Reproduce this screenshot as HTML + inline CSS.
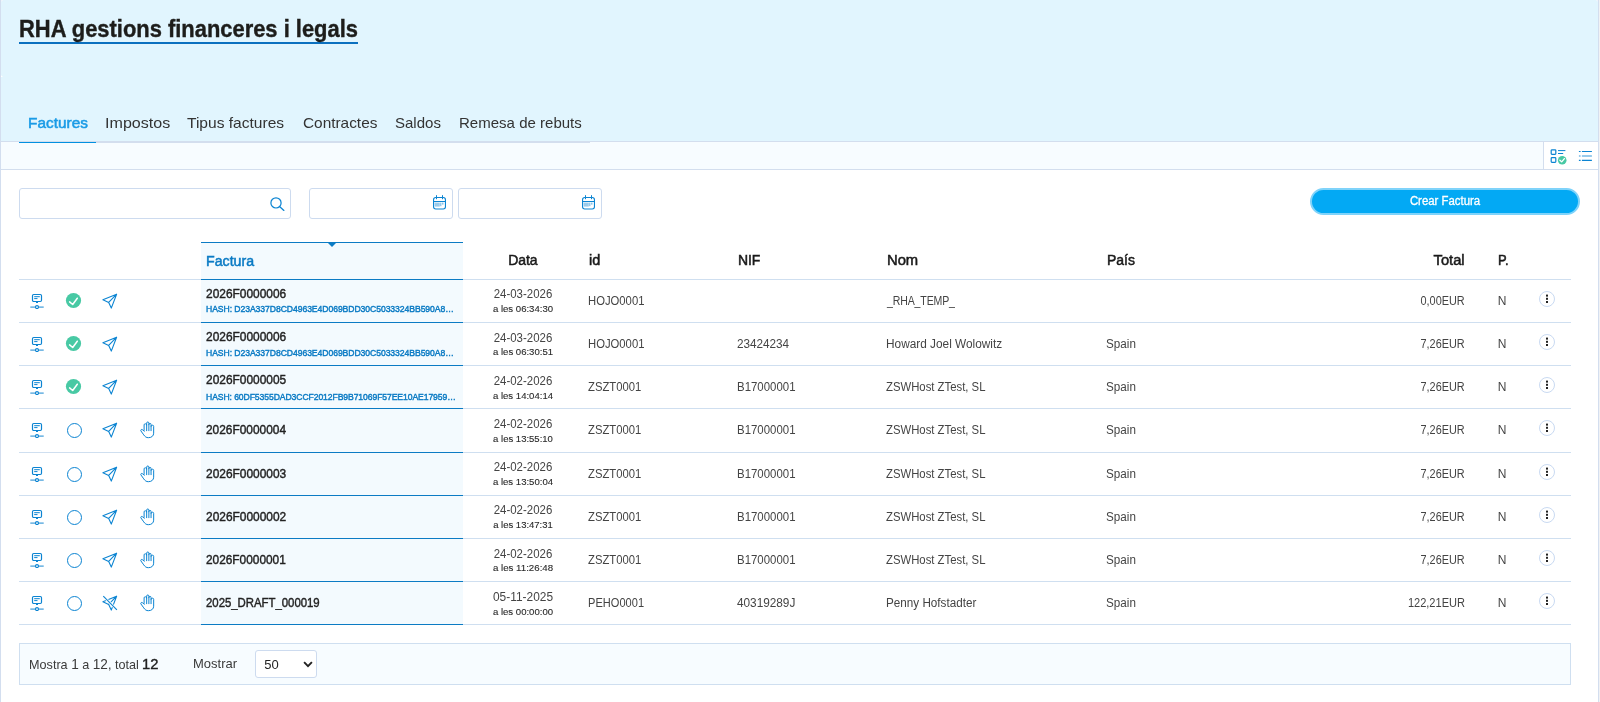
<!DOCTYPE html>
<html lang="ca">
<head>
<meta charset="utf-8">
<title>RHA gestions financeres i legals</title>
<style>
html,body{margin:0;padding:0;background:#fff;}
body{font-family:"Liberation Sans",sans-serif;color:#2b2b2b;}
#app{position:relative;width:1600px;height:702px;overflow:hidden;background:#fff;will-change:transform;}
#app::before{content:"";position:absolute;left:0;top:0;width:1px;height:702px;background:#d3deef;z-index:9;}
#app::after{content:"";position:absolute;left:1598px;top:0;width:1px;height:702px;background:#d3deef;z-index:9;border-right:1px solid #f1f2f4;}
.hdr{position:absolute;left:0;top:0;width:1600px;height:141px;background:#e1f5fe;border-bottom:1px solid #d3deee;}
.title{position:absolute;left:19px;top:14px;margin:0;font-size:24px;line-height:30px;font-weight:700;color:#1d1d1b;-webkit-text-stroke:.4px #1d1d1b;white-space:nowrap;border-bottom:2px solid #0b70bf;height:28px;width:339px;}
.title span{display:inline-block;transform-origin:left center;}
.tabs{position:absolute;left:0;top:104px;height:39px;width:600px;z-index:2;}
.tab{position:absolute;top:0;height:39px;box-sizing:border-box;padding-left:9px;font-size:15px;line-height:37px;color:#333;white-space:nowrap;border-bottom:1px solid #d3deee;}
.tab.on{color:#1a9be6;border-bottom-color:#0290e0;-webkit-text-stroke:.55px #1a9be6;}
.tab span{display:inline-block;transform-origin:left center;}
.strip{position:absolute;left:1px;top:142px;width:1597px;height:27px;background:#f7fcff;border-bottom:1px solid #d3deee;}
.tools{position:absolute;left:1542px;top:0;width:54px;height:27px;background:#fff;border-left:1px solid #d3deee;}
.tools svg{position:absolute;}
.ic-lc{left:6px;top:7px;}
.ic-ls{left:34px;top:8px;}
.inp{position:absolute;top:188px;height:31px;box-sizing:border-box;border:1px solid #cddbef;border-radius:3px;background:#fff;}
.inp svg{position:absolute;}
.s1{left:19px;width:272px;} .s1 svg{left:250px;top:8px;}
.d1{left:309px;width:144px;} .d1 svg{left:123px;top:6px;}
.d2{left:458px;width:144px;} .d2 svg{left:123px;top:6px;}
.btn{position:absolute;left:1310px;top:188px;width:270px;height:27px;box-sizing:border-box;border:2px solid #7fd3fa;border-radius:14px;background:#03a9f4;color:#fff;font-family:inherit;font-size:12px;font-weight:400;line-height:21px;padding:0;text-align:center;-webkit-text-stroke:.3px #fff;}
.btn span{display:inline-block;transform-origin:center;}
.tbl{position:absolute;left:0;top:0;width:1600px;height:0;}
.fcol{position:absolute;left:201px;top:242px;width:262px;height:383px;background:#f3fafe;}
.ln{position:absolute;left:19px;width:1552px;height:1px;background:#cfdff0;}
.fl{position:absolute;left:201px;width:262px;height:1px;background:#0b7bc4;}
.thead{position:absolute;left:0;top:243px;height:36px;width:1600px;}
.th{position:absolute;top:-1px;font-size:14px;line-height:36px;font-weight:400;color:#1a1a1a;white-space:nowrap;-webkit-text-stroke:.5px #1a1a1a;transform-origin:left center;}
.th.c-fac{top:0;color:#0b7bc4;-webkit-text-stroke-color:#0b7bc4;}
.caret{position:absolute;left:328px;top:0;width:0;height:0;border-left:4px solid transparent;border-right:4px solid transparent;border-top:4px solid #0b7bc4;}
.tr{position:absolute;left:0;width:1600px;}
.tr svg{position:absolute;}
.td{position:absolute;top:0;font-size:12px;line-height:43px;white-space:nowrap;color:#444;transform-origin:left center;}
.c-fac{left:206px;} .c-id{left:588px;} .c-nif{left:737px;} .c-nom{left:886px;} .c-pai{left:1106px;} .c-p{left:1497.7px;}
.c-tot{right:135px;text-align:right;transform-origin:right center !important;}
.th.c-dat{left:483px;width:80px;text-align:center;}
.td.c-dat{left:473px;width:100px;text-align:center;line-height:14px;}
.td.c-dat span{display:block;position:relative;margin-top:7px;transform-origin:center;} .td.c-dat small{display:block;position:relative;font-size:9.6px;color:#2a2a2a;-webkit-text-stroke:.12px #2a2a2a;margin-top:0.8px;transform-origin:center;}
.td.c-fac b{display:block;font-weight:400;color:#222;-webkit-text-stroke:.4px #222;transform-origin:left center;}
.td.c-fac em{display:block;position:relative;font-style:normal;font-size:9.8px;font-weight:400;color:#0b7bc4;-webkit-text-stroke:.45px #0b7bc4;margin-top:1.2px;transform-origin:left center;}
.td.c-fac.two{line-height:14px;} .td.c-fac.two b{margin-top:7px;}
.i1{left:29px;top:12px;} .i2{left:65.45px;top:12.3px;} .i2.rg{left:65.8px;top:12.5px;} .i3{left:101px;top:12px;} .i4{left:139.5px;top:12px;}
.menu{position:absolute;left:1539px;top:10.6px;width:16px;height:16px;box-sizing:border-box;border:1px solid #c9daf2;border-radius:50%;background:#fff;}
.menu svg{left:5px;top:2px;}
.pager{position:absolute;left:19px;top:643px;width:1552px;height:42px;box-sizing:border-box;border:1px solid #cfdff0;background:#f7fcff;font-size:13px;line-height:40px;color:#3a3a3a;}
.pager span{position:absolute;top:0;white-space:nowrap;transform-origin:left center;}
.pg1{left:9px;} .pg2{left:122px;font-size:15px;font-weight:400;color:#222;-webkit-text-stroke:.4px #222;} .pg3{left:173px;}
.sel{left:235px;top:6px !important;width:62px;height:28px;box-sizing:border-box;border:1px solid #cddbef;border-radius:3px;background:#fff;line-height:26px;color:#222;}
.sel span{left:8.3px;top:.6px;font-size:13px;} .sel svg{position:absolute;left:47px;top:10px;}
.pg1 i{font-style:normal;font-size:14px;}
.th.c-id{left:588.7px;} .th.c-nif{left:737.8px;} .th.c-nom{left:887px;} .th.c-pai{left:1106.5px;} .th.c-p{left:1497.6px;} .th.c-tot{right:135.4px;} .th.c-dat{left:482.8px;}
.td.c-nom.us{left:887px;}
.px{position:absolute;width:1px;height:1px;z-index:10;}
.px.a{left:1px;top:76px;background:#fff;box-shadow:1px 0 0 rgba(255,255,255,.45),0 -1px 0 rgba(255,255,255,.3);}
.px.b{left:1px;top:0;background:#eef3fa;box-shadow:1px 0 0 #edf6fd,0 1px 0 #e8f5fd;}
.px.c{left:1597px;top:0;background:#eef3fa;box-shadow:-1px 0 0 #edf6fd,0 1px 0 #e8f5fd;}
</style>
</head>
<body>
<svg width="0" height="0" style="position:absolute" aria-hidden="true">
<defs>
<symbol id="i-stand" viewBox="0 0 16 17"><g fill="none" stroke="#0b84d2" stroke-width="1.2"><rect x="3.5" y="2.5" width="9" height="7" rx="1.2"/><path d="M6.7 9.7 L8 11 L9.3 9.7" stroke-width="1"/><path d="M5.2 4.7H10.8M5.2 6.6H8.5" stroke-width="1"/><path d="M1.3 15.1H14.7" stroke="#3d9bd9" stroke-width="1.2"/><circle cx="8" cy="15.1" r="1.5" fill="#fff" stroke-width="1.1"/></g></symbol>
<symbol id="i-ok" viewBox="0 0 17 17"><circle cx="8.5" cy="8.5" r="7.6" fill="#48c9a4"/><path d="M4.6 9.9 L7.7 12.5 L12.3 6.2" fill="none" stroke="#fff" stroke-width="1.5" stroke-linecap="round" stroke-linejoin="round"/></symbol>
<symbol id="i-ring" viewBox="0 0 17 17"><circle cx="8.5" cy="8.5" r="7" fill="none" stroke="#0b84d2" stroke-width="1"/></symbol>
<symbol id="i-plane" viewBox="0 0 17 17"><path d="M15.6 2.2 L1.9 7.8 L7.7 10.4 L10.3 16.1 Z M15.6 2.2 L7.7 10.4" fill="none" stroke="#0b84d2" stroke-width="1.1" stroke-linejoin="round"/></symbol>
<symbol id="i-planex" viewBox="0 0 17 17"><path d="M15.6 2.2 L1.9 7.8 L7.7 10.4 L10.3 16.1 Z M15.6 2.2 L7.7 10.4" fill="none" stroke="#0b84d2" stroke-width="1.1" stroke-linejoin="round"/><path d="M2.3 2.2 L15.9 15.9" stroke="#fff" stroke-width="2.6"/><path d="M2.3 2.2 L15.9 15.9" stroke="#0b84d2" stroke-width="1.1"/></symbol>
<symbol id="i-hand" viewBox="0 0 16 18"><path d="M4.1 9.3 V3.9 a1.28 1.1 0 0 1 2.56 0 V9.7 M6.66 3.9 V2.1 a1.1 1.1 0 0 1 2.2 0 V9.7 M8.86 3.5 a1.1 1.1 0 0 1 2.2 0 V9.7 M11.06 5.3 a1.3 1.1 0 0 1 2.6 0 V12.2 c0 2.6 -2 4.5 -5.3 4.5 c-2 0 -3.4 -1 -4.6 -2.8 L0.9 9.9 c-.6 -1 .7 -1.9 1.5 -1.2 L4.3 10.2" fill="none" stroke="#0b84d2" stroke-width="1" stroke-linecap="round" stroke-linejoin="round"/></symbol>
<symbol id="i-search" viewBox="0 0 16 15"><circle cx="6" cy="5.9" r="5.1" fill="none" stroke="#0b84d2" stroke-width="1.2"/><path d="M9.8 9.8 L13.9 13.4" stroke="#0b84d2" stroke-width="1.3" stroke-linecap="round"/></symbol>
<symbol id="i-cal" viewBox="0 0 14 15"><rect x=".55" y="2.55" width="11.9" height="11.4" rx="2.2" fill="none" stroke="#0b84d2" stroke-width="1.1"/><path d="M3.5 .2V4.2M9.5 .2V4.2" stroke="#0b84d2" stroke-width="1"/><path d="M.6 6.5H12.4" stroke="#0b84d2" stroke-width="1"/><rect x="1.6" y="7.6" width="5.2" height="4" fill="#0b84d2" opacity=".42"/><rect x="7.4" y="7.6" width=".9" height="3.6" fill="#0b84d2" opacity=".7"/><rect x="9.4" y="7.6" width=".9" height="2" fill="#0b84d2" opacity=".8"/></symbol>
<symbol id="i-dots" viewBox="0 0 4 10"><rect x="1" y=".6" width="2" height="2" fill="#222"/><rect x="1" y="3.8" width="2" height="2" fill="#222"/><rect x="1" y="7" width="2" height="2" fill="#222"/></symbol>
<symbol id="i-chev" viewBox="0 0 11 7"><path d="M1.1 1.2 L5 5.2 L8.9 1.2" fill="none" stroke="#222" stroke-width="1.9"/></symbol>
<symbol id="i-listcheck" viewBox="0 0 18 16"><g fill="none" stroke="#0b84d2"><rect x="1.2" y=".8" width="4.6" height="4.6" rx=".8" stroke-width="1.2"/><rect x="1.2" y="8.7" width="4.6" height="4.6" rx=".8" stroke-width="1.2"/><path d="M8 1.6H15.4M8 4.5H13.2" stroke-width="1"/></g><circle cx="12.2" cy="11.2" r="4.3" fill="#48c9a4"/><path d="M9.9 11.2 L11.7 12.9 L14.4 9.6" fill="none" stroke="#fff" stroke-width="1.3" stroke-linecap="round" stroke-linejoin="round"/></symbol>
<symbol id="i-list" viewBox="0 0 15 12"><g stroke="#0b84d2"><path d="M.9 1.5H2.6M3.9 1.5H13.9" stroke-width="1.1"/><path d="M.9 6H2.6M3.9 6H13.9" stroke-width="1.7" opacity=".55"/><path d="M.9 10.4H2.6M3.9 10.4H13.9" stroke-width="1.1"/></g></symbol>
</defs>
</svg>
<div id="app">
<header class="hdr">
<h1 class="title"><span style="transform:scaleX(0.913)">RHA gestions financeres i legals</span></h1>
<nav class="tabs">
<a class="tab on" style="left:19px;width:77px"><span style="letter-spacing:0.03px;transform:scaleX(1.022)">Factures</span></a>
<a class="tab" style="left:96px;width:82px"><span style="letter-spacing:0.02px;transform:scaleX(1.071)">Impostos</span></a>
<a class="tab" style="left:178px;width:116px"><span style="letter-spacing:-0.01px;transform:scaleX(1.038)">Tipus factures</span></a>
<a class="tab" style="left:294px;width:92px"><span style="letter-spacing:-0.01px;transform:scaleX(1.027)">Contractes</span></a>
<a class="tab" style="left:386px;width:64px"><span style="letter-spacing:-0.01px;transform:scaleX(1.002)">Saldos</span></a>
<a class="tab" style="left:450px;width:140px"><span style="transform:scaleX(1.002)">Remesa de rebuts</span></a>
</nav>
</header>
<div class="strip"><div class="tools"><svg class="ic-lc" width="18" height="16" viewBox="0 0 18 16"><use href="#i-listcheck"/></svg><svg class="ic-ls" width="15" height="12" viewBox="0 0 15 12"><use href="#i-list"/></svg></div></div>
<div class="filters">
<div class="inp s1"><svg width="16" height="15" viewBox="0 0 16 15"><use href="#i-search"/></svg></div>
<div class="inp d1"><svg width="14" height="15" viewBox="0 0 14 15"><use href="#i-cal"/></svg></div>
<div class="inp d2"><svg width="14" height="15" viewBox="0 0 14 15"><use href="#i-cal"/></svg></div>
<button class="btn"><span style="transform:scaleX(0.949)">Crear Factura</span></button>
</div>
<div class="tbl">
<div class="fcol"></div>
<div class="thead">
<span class="th c-fac" style="letter-spacing:0.01px;transform:scaleX(1.012)">Factura</span><i class="caret"></i><span class="th c-dat" style="letter-spacing:-0.03px;transform:scaleX(0.998)">Data</span><span class="th c-id" style="transform:scaleX(1.032)">id</span><span class="th c-nif" style="letter-spacing:-0.16px;transform:scaleX(0.998)">NIF</span><span class="th c-nom" style="letter-spacing:-0.02px;transform:scaleX(1.057)">Nom</span><span class="th c-pai" style="letter-spacing:-0.03px;transform:scaleX(0.998)">País</span><span class="th c-tot" style="letter-spacing:0.01px;transform:scaleX(1.048)">Total</span><span class="th c-p" style="transform:scaleX(0.926)">P.</span>
</div>
<div class="tr" style="top:280px;height:42px">
<svg class="i1" width="16" height="17" viewBox="0 0 16 17"><use href="#i-stand"/></svg><svg class="i2" width="17" height="17" viewBox="0 0 17 17"><use href="#i-ok"/></svg><svg class="i3" width="17" height="17" viewBox="0 0 17 17"><use href="#i-plane"/></svg>
<span class="td c-fac two"><b style="transform:scaleX(0.994)">2026F0000006</b><em style="letter-spacing:-0.08px;transform:scaleX(0.880)">HASH: D23A337D8CD4963E4D069BDD30C5033324BB590A8…</em></span><span class="td c-dat"><span style="letter-spacing:0.02px;transform:scaleX(0.952)">24-03-2026</span><small style="transform:scaleX(0.998)">a les 06:34:30</small></span><span class="td c-id" style="letter-spacing:0.01px;transform:scaleX(0.939)">HOJO0001</span><span class="td c-nom us" style="letter-spacing:-0.16px;transform:scaleX(0.880)">_RHA_TEMP_</span><span class="td c-tot" style="letter-spacing:-0.01px;transform:scaleX(0.907)">0,00EUR</span><span class="td c-p">N</span><span class="menu"><svg width="4" height="10" viewBox="0 0 4 10"><use href="#i-dots"/></svg></span>
</div>
<div class="tr" style="top:323px;height:42px">
<svg class="i1" width="16" height="17" viewBox="0 0 16 17"><use href="#i-stand"/></svg><svg class="i2" width="17" height="17" viewBox="0 0 17 17"><use href="#i-ok"/></svg><svg class="i3" width="17" height="17" viewBox="0 0 17 17"><use href="#i-plane"/></svg>
<span class="td c-fac two"><b style="transform:scaleX(0.994)">2026F0000006</b><em style="letter-spacing:-0.08px;transform:scaleX(0.880);top:0.5px">HASH: D23A337D8CD4963E4D069BDD30C5033324BB590A8…</em></span><span class="td c-dat"><span style="letter-spacing:0.02px;transform:scaleX(0.952);top:0.5px">24-03-2026</span><small style="transform:scaleX(0.996)">a les 06:30:51</small></span><span class="td c-id" style="letter-spacing:0.01px;transform:scaleX(0.939)">HOJO0001</span><span class="td c-nif" style="letter-spacing:-0.03px;transform:scaleX(0.979)">23424234</span><span class="td c-nom" style="transform:scaleX(0.986)">Howard Joel Wolowitz</span><span class="td c-pai" style="letter-spacing:0.03px;transform:scaleX(0.973)">Spain</span><span class="td c-tot" style="letter-spacing:-0.01px;transform:scaleX(0.907)">7,26EUR</span><span class="td c-p">N</span><span class="menu"><svg width="4" height="10" viewBox="0 0 4 10"><use href="#i-dots"/></svg></span>
</div>
<div class="tr" style="top:366px;height:42px">
<svg class="i1" width="16" height="17" viewBox="0 0 16 17"><use href="#i-stand"/></svg><svg class="i2" width="17" height="17" viewBox="0 0 17 17"><use href="#i-ok"/></svg><svg class="i3" width="17" height="17" viewBox="0 0 17 17"><use href="#i-plane"/></svg>
<span class="td c-fac two"><b style="transform:scaleX(0.994)">2026F0000005</b><em style="letter-spacing:-0.11px;transform:scaleX(0.880);top:1.8px">HASH: 60DF5355DAD3CCF2012FB9B71069F57EE10AE17959…</em></span><span class="td c-dat"><span style="letter-spacing:0.02px;transform:scaleX(0.952);top:1px">24-02-2026</span><small style="transform:scaleX(0.998);top:1px">a les 14:04:14</small></span><span class="td c-id" style="transform:scaleX(0.938)">ZSZT0001</span><span class="td c-nif" style="letter-spacing:0.03px;transform:scaleX(0.950)">B17000001</span><span class="td c-nom" style="transform:scaleX(0.944)">ZSWHost ZTest, SL</span><span class="td c-pai" style="letter-spacing:0.03px;transform:scaleX(0.973)">Spain</span><span class="td c-tot" style="letter-spacing:-0.01px;transform:scaleX(0.907)">7,26EUR</span><span class="td c-p">N</span><span class="menu"><svg width="4" height="10" viewBox="0 0 4 10"><use href="#i-dots"/></svg></span>
</div>
<div class="tr t44" style="top:409px;height:43px">
<svg class="i1" width="16" height="17" viewBox="0 0 16 17"><use href="#i-stand"/></svg><svg class="i2 rg" width="17" height="17" viewBox="0 0 17 17"><use href="#i-ring"/></svg><svg class="i3" width="17" height="17" viewBox="0 0 17 17"><use href="#i-plane"/></svg><svg class="i4" width="16" height="18" viewBox="0 0 16 18"><use href="#i-hand"/></svg>
<span class="td c-fac one"><b style="transform:scaleX(0.991)">2026F0000004</b></span><span class="td c-dat"><span style="letter-spacing:0.02px;transform:scaleX(0.952);top:1px">24-02-2026</span><small style="transform:scaleX(0.992);top:1.5px">a les 13:55:10</small></span><span class="td c-id" style="transform:scaleX(0.938)">ZSZT0001</span><span class="td c-nif" style="letter-spacing:0.03px;transform:scaleX(0.950)">B17000001</span><span class="td c-nom" style="transform:scaleX(0.944)">ZSWHost ZTest, SL</span><span class="td c-pai" style="letter-spacing:0.03px;transform:scaleX(0.973)">Spain</span><span class="td c-tot" style="letter-spacing:-0.01px;transform:scaleX(0.907)">7,26EUR</span><span class="td c-p">N</span><span class="menu"><svg width="4" height="10" viewBox="0 0 4 10"><use href="#i-dots"/></svg></span>
</div>
<div class="tr" style="top:453px;height:42px">
<svg class="i1" width="16" height="17" viewBox="0 0 16 17"><use href="#i-stand"/></svg><svg class="i2 rg" width="17" height="17" viewBox="0 0 17 17"><use href="#i-ring"/></svg><svg class="i3" width="17" height="17" viewBox="0 0 17 17"><use href="#i-plane"/></svg><svg class="i4" width="16" height="18" viewBox="0 0 16 18"><use href="#i-hand"/></svg>
<span class="td c-fac one"><b style="transform:scaleX(0.994)">2026F0000003</b></span><span class="td c-dat"><span style="letter-spacing:0.02px;transform:scaleX(0.952)">24-02-2026</span><small style="transform:scaleX(0.998)">a les 13:50:04</small></span><span class="td c-id" style="transform:scaleX(0.938)">ZSZT0001</span><span class="td c-nif" style="letter-spacing:0.03px;transform:scaleX(0.950)">B17000001</span><span class="td c-nom" style="transform:scaleX(0.944)">ZSWHost ZTest, SL</span><span class="td c-pai" style="letter-spacing:0.03px;transform:scaleX(0.973)">Spain</span><span class="td c-tot" style="letter-spacing:-0.01px;transform:scaleX(0.907)">7,26EUR</span><span class="td c-p">N</span><span class="menu"><svg width="4" height="10" viewBox="0 0 4 10"><use href="#i-dots"/></svg></span>
</div>
<div class="tr" style="top:496px;height:42px">
<svg class="i1" width="16" height="17" viewBox="0 0 16 17"><use href="#i-stand"/></svg><svg class="i2 rg" width="17" height="17" viewBox="0 0 17 17"><use href="#i-ring"/></svg><svg class="i3" width="17" height="17" viewBox="0 0 17 17"><use href="#i-plane"/></svg><svg class="i4" width="16" height="18" viewBox="0 0 16 18"><use href="#i-hand"/></svg>
<span class="td c-fac one"><b style="transform:scaleX(0.994)">2026F0000002</b></span><span class="td c-dat"><span style="letter-spacing:0.02px;transform:scaleX(0.952)">24-02-2026</span><small style="transform:scaleX(0.989)">a les 13:47:31</small></span><span class="td c-id" style="transform:scaleX(0.938)">ZSZT0001</span><span class="td c-nif" style="letter-spacing:0.03px;transform:scaleX(0.950)">B17000001</span><span class="td c-nom" style="transform:scaleX(0.944)">ZSWHost ZTest, SL</span><span class="td c-pai" style="letter-spacing:0.03px;transform:scaleX(0.973)">Spain</span><span class="td c-tot" style="letter-spacing:-0.01px;transform:scaleX(0.907)">7,26EUR</span><span class="td c-p">N</span><span class="menu"><svg width="4" height="10" viewBox="0 0 4 10"><use href="#i-dots"/></svg></span>
</div>
<div class="tr" style="top:539px;height:42px">
<svg class="i1" width="16" height="17" viewBox="0 0 16 17"><use href="#i-stand"/></svg><svg class="i2 rg" width="17" height="17" viewBox="0 0 17 17"><use href="#i-ring"/></svg><svg class="i3" width="17" height="17" viewBox="0 0 17 17"><use href="#i-plane"/></svg><svg class="i4" width="16" height="18" viewBox="0 0 16 18"><use href="#i-hand"/></svg>
<span class="td c-fac one"><b style="transform:scaleX(0.988)">2026F0000001</b></span><span class="td c-dat"><span style="letter-spacing:0.02px;transform:scaleX(0.952);top:1px">24-02-2026</span><small style="transform:scaleX(1.011)">a les 11:26:48</small></span><span class="td c-id" style="transform:scaleX(0.938)">ZSZT0001</span><span class="td c-nif" style="letter-spacing:0.03px;transform:scaleX(0.950)">B17000001</span><span class="td c-nom" style="transform:scaleX(0.944)">ZSWHost ZTest, SL</span><span class="td c-pai" style="letter-spacing:0.03px;transform:scaleX(0.973)">Spain</span><span class="td c-tot" style="letter-spacing:-0.01px;transform:scaleX(0.907)">7,26EUR</span><span class="td c-p">N</span><span class="menu"><svg width="4" height="10" viewBox="0 0 4 10"><use href="#i-dots"/></svg></span>
</div>
<div class="tr" style="top:582px;height:42px">
<svg class="i1" width="16" height="17" viewBox="0 0 16 17"><use href="#i-stand"/></svg><svg class="i2 rg" width="17" height="17" viewBox="0 0 17 17"><use href="#i-ring"/></svg><svg class="i3" width="17" height="17" viewBox="0 0 17 17"><use href="#i-planex"/></svg><svg class="i4" width="16" height="18" viewBox="0 0 16 18"><use href="#i-hand"/></svg>
<span class="td c-fac one"><b style="letter-spacing:-0.02px;transform:scaleX(0.949)">2025_DRAFT_000019</b></span><span class="td c-dat"><span style="transform:scaleX(0.992);top:1px">05-11-2025</span><small style="transform:scaleX(0.998);top:1px">a les 00:00:00</small></span><span class="td c-id" style="letter-spacing:0.04px;transform:scaleX(0.920)">PEHO0001</span><span class="td c-nif" style="letter-spacing:-0.02px;transform:scaleX(0.984)">40319289J</span><span class="td c-nom" style="transform:scaleX(0.974)">Penny Hofstadter</span><span class="td c-pai" style="letter-spacing:0.03px;transform:scaleX(0.973)">Spain</span><span class="td c-tot" style="letter-spacing:-0.01px;transform:scaleX(0.921)">122,21EUR</span><span class="td c-p">N</span><span class="menu"><svg width="4" height="10" viewBox="0 0 4 10"><use href="#i-dots"/></svg></span>
</div>
<div class="ln" style="top:279px"></div><div class="ln" style="top:322px"></div><div class="ln" style="top:365px"></div><div class="ln" style="top:408px"></div><div class="ln" style="top:452px"></div><div class="ln" style="top:495px"></div><div class="ln" style="top:538px"></div><div class="ln" style="top:581px"></div><div class="ln" style="top:624px"></div>
<div class="fl" style="top:242px"></div><div class="fl" style="top:279px"></div><div class="fl" style="top:322px"></div><div class="fl" style="top:365px"></div><div class="fl" style="top:408px"></div><div class="fl" style="top:452px"></div><div class="fl" style="top:495px"></div><div class="fl" style="top:538px"></div><div class="fl" style="top:581px"></div><div class="fl" style="top:624px"></div>
</div>
<div class="pager"><span class="pg1" style="letter-spacing:0.01px;transform:scaleX(0.971)">Mostra <i>1</i> a <i>12</i>, total</span><span class="pg2" style="transform:scaleX(0.984)">12</span><span class="pg3" style="letter-spacing:0.01px;transform:scaleX(0.998)">Mostrar</span><span class="sel"><span>50</span><svg width="11" height="7" viewBox="0 0 11 7"><use href="#i-chev"/></svg></span></div>
<i class="px a"></i><i class="px b"></i><i class="px c"></i>
</div>
</body>
</html>
